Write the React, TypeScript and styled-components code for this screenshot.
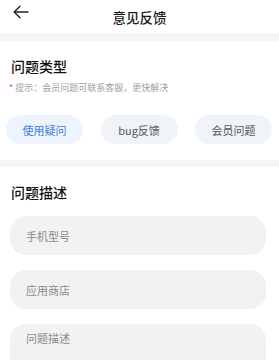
import styled, { createGlobalStyle } from 'styled-components'

const GlobalStyle = createGlobalStyle`
    html, body {
        margin: 0;
        padding: 0;
        background: #f5f5f5;
        font-family: 'Noto Sans CJK SC', 'Noto Sans', sans-serif;
    }
    * {
        box-sizing: border-box;
    }
`

const types = ['使用疑问', 'bug反馈', '会员问题']

function App() {
    return (
        <Page>
            <GlobalStyle />
            <Header>
                <BackButton>
                    <svg width="16" height="14" viewBox="0 0 16 14" fill="none">
                        <path d="M15 7H1.5M7 1.2 1.2 7 7 12.8" stroke="#222" strokeWidth="1.4" strokeLinecap="round" strokeLinejoin="round" />
                    </svg>
                </BackButton>
                <HeaderTitle>意见反馈</HeaderTitle>
            </Header>

            {/* 问题类型 */}
            <Section>
                <SectionTitle>问题类型</SectionTitle>
                <Hint>
                    <Star>*</Star> 提示：会员问题可联系客服，更快解决
                </Hint>
                <ChipRow>
                    {types.map((t, i) => (
                        <Chip key={t} $active={i === 0}>
                            {t}
                        </Chip>
                    ))}
                </ChipRow>
            </Section>

            {/* 问题描述 */}
            <Section $last>
                <SectionTitle>问题描述</SectionTitle>
                <Fields>
                    <Input placeholder="手机型号" />
                    <Input placeholder="应用商店" />
                    <TextArea placeholder="问题描述" />
                </Fields>
            </Section>
        </Page>
    )
}

export default App

const Page = styled.div`
    width: 100%;
    height: 360px;
    overflow: hidden;
    background: #f5f5f5;
`

const Header = styled.div`
    position: relative;
    height: 33px;
    display: flex;
    align-items: center;
    justify-content: center;
    background: #ffffff;
`

const BackButton = styled.div`
    position: absolute;
    left: 13px;
    top: 5px;
    display: flex;
    align-items: center;
`

const HeaderTitle = styled.div`
    font-size: 13.5px;
    font-weight: 500;
    color: #1a1a1a;
    line-height: 18px;
`

const Section = styled.div<{ $last?: boolean }>`
    background: #ffffff;
    margin-top: ${p => (p.$last ? 7 : 8)}px;
    padding: 16px 0 ${p => (p.$last ? 40 : 16)}px;
`

const SectionTitle = styled.div`
    padding: 0 11px;
    font-size: 14px;
    font-weight: 500;
    line-height: 18px;
    color: #111111;
`

const Hint = styled.div`
    margin-top: 7px;
    padding: 0 9px;
    font-size: 9px;
    line-height: 12px;
    color: #a0a0a0;
`

const Star = styled.span`
    color: #e0554f;
`

const ChipRow = styled.div`
    display: flex;
    justify-content: space-between;
    margin-top: 21px;
    padding: 0 7px 0 6px;
`

const Chip = styled.div<{ $active?: boolean }>`
    width: 77px;
    height: 29px;
    border-radius: 15px;
    display: flex;
    align-items: center;
    justify-content: center;
    font-size: 11px;
    background: ${p => (p.$active ? '#edf4fe' : '#f0f4f9')};
    color: ${p => (p.$active ? '#3a7fe0' : '#555555')};
`

const Fields = styled.div`
    display: flex;
    flex-direction: column;
    gap: 15px;
    margin-top: 15px;
    padding: 0 13px 0 10px;
`

const Input = styled.input`
    width: 100%;
    height: 39px;
    border: none;
    outline: none;
    border-radius: 16px;
    background: #f2f2f2;
    padding: 0 16px;
    font-family: inherit;
    font-size: 11px;
    color: #333333;
    &::placeholder {
        color: #8a8a8a;
    }
`

const TextArea = styled.textarea`
    width: 100%;
    height: 100px;
    border: none;
    outline: none;
    resize: none;
    border-radius: 16px;
    background: #f2f2f2;
    padding: 6px 16px;
    font-family: inherit;
    font-size: 11px;
    line-height: 16px;
    color: #333333;
    &::placeholder {
        color: #8a8a8a;
    }
`
